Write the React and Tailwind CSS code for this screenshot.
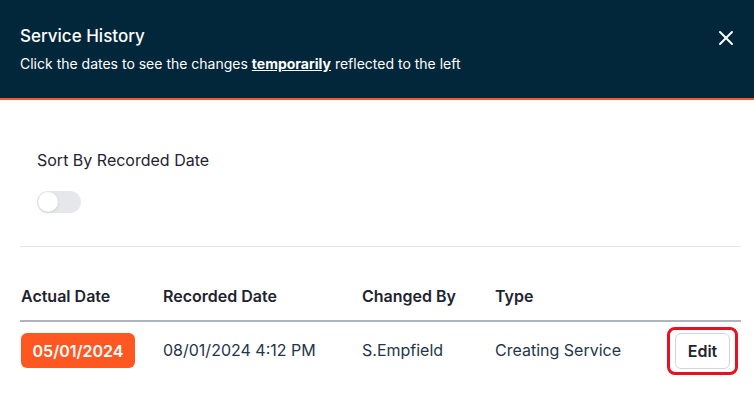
import { X } from "lucide-react";

export default function App() {
  const rows = [
    { actual: "05/01/2024", recorded: "08/01/2024 4:12 PM", by: "S.Empfield", type: "Creating Service" },
  ];

  return (
    <div className="w-[754px] h-[411px] bg-white overflow-hidden" style={{ fontFamily: "Inter, 'Noto Sans', sans-serif" }}>
      {/* Header */}
      <div className="bg-[#02273b] border-b-2 border-[#ff5722] h-[100px] pl-5 pr-4 pt-[25px] flex justify-between">
        <div>
          <h1 className="text-white text-[17px] font-medium leading-[22px]">Service History</h1>
          <p className="text-white text-[14px] leading-[20px] mt-[7px]">
            Click the dates to see the changes{" "}
            <span className="font-bold underline">temporarily</span> reflected to the left
          </p>
        </div>
        <button className="text-white h-[22px] mt-[1px]">
          <X size={24} strokeWidth={2} />
        </button>
      </div>

      {/* Sort toggle */}
      <div className="pl-5 pr-[13px]">
        <div className="px-[17px] pt-[50px] pb-[33px] border-b border-gray-200">
          <p className="text-[16px] text-[#1f2430] leading-5">Sort By Recorded Date</p>
          <div className="mt-[21px] w-[44px] h-[22px] rounded-full bg-gray-200 flex items-center px-[1px]">
            <div className="w-5 h-5 rounded-full bg-white shadow" />
          </div>
        </div>

        {/* Table */}
        <table className="w-full mt-[37px] text-left">
          <thead>
            <tr className="border-b-2 border-gray-400/80">
              <th className="w-[143px] pb-[12px] text-[16px] leading-6 font-semibold text-[#1e2330] pl-[1px]">Actual Date</th>
              <th className="w-[199px] pb-[12px] text-[16px] leading-6 font-semibold text-[#1e2330]">Recorded Date</th>
              <th className="w-[133px] pb-[12px] text-[16px] leading-6 font-semibold text-[#1e2330]">Changed By</th>
              <th className="pb-[12px] text-[16px] leading-6 font-semibold text-[#1e2330]">Type</th>
              <th className="pb-[12px]"></th>
            </tr>
          </thead>
          <tbody>
            {rows.map((r, i) => (
              <tr key={i} className="text-[16px] text-[#233649]">
                <td className="pt-[11px] pl-[1px] align-top">
                  <button className="bg-[#ff5722] text-white font-semibold text-[16px] rounded-md w-[114px] h-[35px]">
                    {r.actual}
                  </button>
                </td>
                <td className="pt-[11px] align-top leading-[35px]">{r.recorded}</td>
                <td className="pt-[11px] align-top leading-[35px]">{r.by}</td>
                <td className="pt-[11px] align-top leading-[35px]">{r.type}</td>
                <td className="pt-[5px] text-right align-top">
                  <div className="inline-flex border-[3px] border-[#e81123] rounded-lg px-[5px] py-[3px] mr-[3px]">
                    <button className="bg-white border border-gray-300 rounded-md w-[55px] h-[36px] text-[16px] font-semibold text-[#1e2330]">
                      Edit
                    </button>
                  </div>
                </td>
              </tr>
            ))}
          </tbody>
        </table>
      </div>
    </div>
  );
}
